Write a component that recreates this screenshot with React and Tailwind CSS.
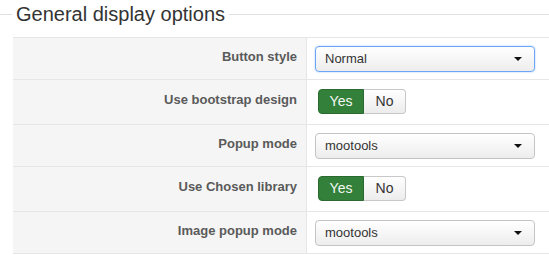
import React from 'react';

const rows = [
  { label: 'Button style', type: 'select', value: 'Normal', focus: true, h: 'h-[42px]' },
  { label: 'Use bootstrap design', type: 'toggle', h: 'h-[45px]' },
  { label: 'Popup mode', type: 'select', value: 'mootools', h: 'h-[42px]' },
  { label: 'Use Chosen library', type: 'toggle', h: 'h-[45px]' },
  { label: 'Image popup mode', type: 'select', value: 'mootools', h: 'h-[42px]' },
];

const Select = ({ value, focus }) => (
  <div
    className={`w-[220px] h-[26px] rounded-[4px] border flex items-center justify-between pl-[9px] pr-[12px] bg-gradient-to-b from-white to-[#ededed] ${
      focus ? 'border-[#6aa6f5] shadow-[0_0_2px_#9cc3f7]' : 'border-[#c4c4c4]'
    }`}
  >
    <span className="text-[13px] text-[#333]">{value}</span>
    <svg width="8" height="4" viewBox="0 0 8 4"><path d="M0 0h8L4 4z" fill="#111" /></svg>
  </div>
);

const Toggle = () => (
  <div className="flex h-[25px] text-[14px]">
    <div className="w-[46px] flex items-center justify-center rounded-l-[4px] bg-[#33803a] border border-[#2a6a30] text-[#f4f8f4]">Yes</div>
    <div className="w-[42px] flex items-center justify-center rounded-r-[4px] border border-l-0 border-[#c8c8c8] bg-gradient-to-b from-white to-[#ececec] text-[#333]">No</div>
  </div>
);

export default function App() {
  return (
    <div className="w-[549px] h-[255px] bg-white font-['Liberation_Sans',Arial,sans-serif] overflow-hidden">
      <div className="flex items-center h-[28px]">
        <div className="w-[12px] h-px bg-[#e0e0e0]" />
        <span className="px-[4px] text-[20px] leading-none text-[#333]">General display options</span>
        <div className="flex-1 h-px bg-[#e0e0e0]" />
      </div>
      <div className="ml-[13px] mt-[9px] border-t border-[#e6e6e6]">
        {rows.map((r) => (
          <div key={r.label} className={`flex border-b border-[#e6e6e6] ${r.h}`}>
            <div className="w-[294px] bg-[#f5f5f5] border-r border-[#e6e6e6] flex items-center justify-end pr-[9px] pb-[4px] text-[13px] font-bold text-[#5a5a5a]">
              {r.label}
            </div>
            <div className={`flex-1 flex items-center ${r.type === 'select' ? 'pl-[8px]' : 'pl-[11px] pb-[2px]'}`}>
              {r.type === 'select' ? <Select value={r.value} focus={r.focus} /> : <Toggle />}
            </div>
          </div>
        ))}
      </div>
    </div>
  );
}
